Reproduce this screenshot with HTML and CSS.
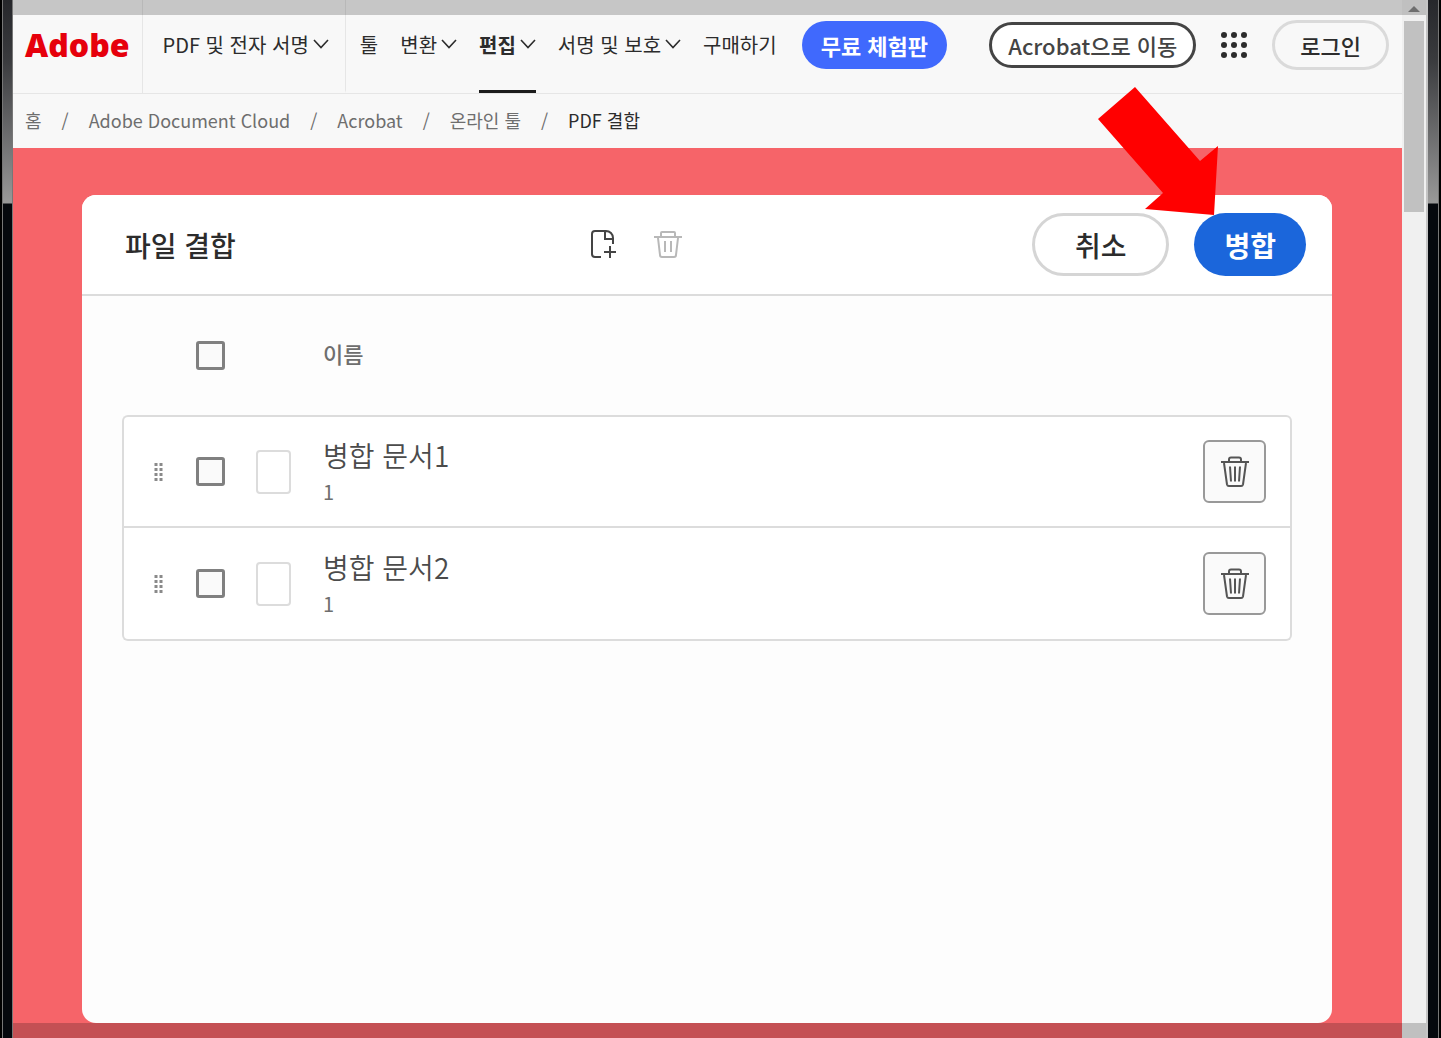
FILE: index.html
```html
<!DOCTYPE html>
<html lang="ko">
<head>
  <meta charset="UTF-8">
  <meta name="viewport" content="width=device-width, initial-scale=1.0">
  <title>PDF 결합</title>
  <link rel="stylesheet" href="styles.css">
</head>
<body>
  <svg class="sprite" aria-hidden="true">
    <symbol id="chevron" viewBox="0 0 16 10">
      <path d="M1 1l7 7.500 7-7.500" fill="none" stroke="currentColor" stroke-width="1.600"/>
    </symbol>
    <symbol id="trash" viewBox="0 0 28 32">
      <path d="M0 6h28M8 5.500V3.500a2 2 0 0 1 2-2h8a2 2 0 0 1 2 2v2M3 7l3 21.500a2 2 0 0 0 2 1.500h12a2 2 0 0 0 2-1.500L25 7M9 10.500l1 15M14 10.500v15M19 10.500l-1 15" fill="none" stroke="currentColor" stroke-width="2"/>
    </symbol>
    <symbol id="grip" viewBox="0 0 9 18">
      <path d="M2 0v18M7 0v18" fill="none" stroke="currentColor" stroke-width="3" stroke-dasharray="3 2"/>
    </symbol>
  </svg>

  <div class="edge edge-left"></div>

  <div class="page">
    <header class="header">
      <a class="logo" href="#">Adobe</a>
      <nav class="nav">
        <a class="nav-item nav-first" href="#">PDF 및 전자 서명<svg class="chevron"><use href="#chevron"/></svg></a>
        <a class="nav-item" href="#">툴</a>
        <a class="nav-item" href="#">변환<svg class="chevron"><use href="#chevron"/></svg></a>
        <a class="nav-item active" href="#">편집<svg class="chevron"><use href="#chevron"/></svg></a>
        <a class="nav-item" href="#">서명 및 보호<svg class="chevron"><use href="#chevron"/></svg></a>
        <a class="nav-item" href="#">구매하기</a>
      </nav>
      <div class="account">
        <button class="button trial">무료 체험판</button>
        <button class="button acrobat">Acrobat으로 이동</button>
        <button class="apps" aria-label="앱">
          <svg width="26" height="26" viewBox="0 0 26 26" fill="#2c2c2c">
            <circle cx="3" cy="3" r="3"/><circle cx="13" cy="3" r="3"/><circle cx="23" cy="3" r="3"/>
            <circle cx="3" cy="13" r="3"/><circle cx="13" cy="13" r="3"/><circle cx="23" cy="13" r="3"/>
            <circle cx="3" cy="23" r="3"/><circle cx="13" cy="23" r="3"/><circle cx="23" cy="23" r="3"/>
          </svg>
        </button>
        <button class="button login">로그인</button>
      </div>
    </header>

    <nav class="breadcrumbs">
      <a href="#">홈</a><span>/</span>
      <a href="#">Adobe Document Cloud</a><span>/</span>
      <a href="#">Acrobat</a><span>/</span>
      <a href="#">온라인 툴</a><span>/</span>
      <a class="current" href="#">PDF 결합</a>
    </nav>

    <main class="stage">
      <section class="card">
        <div class="toolbar">
          <h1 class="title">파일 결합</h1>
          <div class="tools">
            <button class="tool" aria-label="파일 추가">
              <svg width="28" height="30" viewBox="0 0 28 30" fill="none" stroke="currentColor" stroke-width="2">
                <path d="M11 27H5a3 3 0 0 1-3-3V4a3 3 0 0 1 3-3h11a7 7 0 0 1 7 7v6M15 1v8h8"/>
                <path d="M20 16v12M14 22h12"/>
              </svg>
            </button>
            <button class="tool" aria-label="삭제" disabled>
              <svg width="28" height="30" viewBox="0 0 28 30" fill="none" stroke="currentColor" stroke-width="2">
                <path d="M0 7h28M7 6V3a1 1 0 0 1 1-1h12a1 1 0 0 1 1 1v3M4 8l2 17a2 2 0 0 0 2 2h12a2 2 0 0 0 2-2l2-17M11 11v11M17 11v11"/>
              </svg>
            </button>
          </div>
          <div class="actions">
            <button class="button cancel">취소</button>
            <button class="button merge">병합</button>
            <svg class="arrow" width="120" height="128" viewBox="0 0 120 128">
              <path d="M37 0l65 74 18-15-4 69-69-6 18-16L0 32z" fill="#f00"/>
            </svg>
          </div>
        </div>

        <table class="files">
          <thead>
            <tr>
              <th class="col-grip"></th>
              <th class="col-check"><input class="check" type="checkbox" aria-label="모두 선택"></th>
              <th class="col-thumb"></th>
              <th class="col-name">이름</th>
              <th class="col-delete"></th>
            </tr>
          </thead>
          <tbody>
            <tr>
              <td class="col-grip"><svg class="grip"><use href="#grip"/></svg></td>
              <td class="col-check"><input class="check" type="checkbox" aria-label="병합 문서1"></td>
              <td class="col-thumb"><div class="thumb"></div></td>
              <td class="col-name"><div class="name">병합 문서1</div><div class="count">1</div></td>
              <td class="col-delete"><button class="delete" aria-label="병합 문서1 삭제"><svg class="trash"><use href="#trash"/></svg></button></td>
            </tr>
            <tr>
              <td class="col-grip"><svg class="grip"><use href="#grip"/></svg></td>
              <td class="col-check"><input class="check" type="checkbox" aria-label="병합 문서2"></td>
              <td class="col-thumb"><div class="thumb"></div></td>
              <td class="col-name"><div class="name">병합 문서2</div><div class="count">1</div></td>
              <td class="col-delete"><button class="delete" aria-label="병합 문서2 삭제"><svg class="trash"><use href="#trash"/></svg></button></td>
            </tr>
          </tbody>
        </table>
      </section>
    </main>
  </div>

  <div class="scrollbar">
    <svg class="scroll-up" width="12" height="6" viewBox="0 0 12 6"><path d="M0 6l6-6 6 6z" fill="#8a8a8a"/></svg>
    <div class="scroll-thumb"></div>
  </div>

  <div class="edge edge-right"></div>

  <div class="shade shade-top"></div>
  <div class="shade shade-bottom"></div>
</body>
</html>
```

FILE: styles.css
```css
* {
  box-sizing: border-box;
}
body {
  position: relative;
  display: flex;
  min-height: 100vh;
  margin: 0;
  font-family: "Noto Sans CJK KR", sans-serif;
  font-size: 20px;
  color: #2c2c2c;
  background: #f8f8f8;
}
a {
  color: inherit;
  text-decoration: none;
}
button {
  font-family: inherit;
  color: inherit;
  padding: 0;
  border: none;
  background: none;
  cursor: pointer;
}
svg {
  display: block;
}
.sprite {
  position: absolute;
  width: 0;
  height: 0;
}

/* Window frame */
.edge {
  flex: none;
  width: 13px;
  background: linear-gradient(#26272b 0, #3a3b3e 60px, #999 203px, #05080d 204px);
  border: 0 solid #000;
}
.edge-left {
  border-left-width: 2px;
  box-shadow: inset 1px 0 #777, inset -1px 0 #777;
}
.edge-right {
  border-right-width: 2px;
  box-shadow: inset -1px 0 #777;
}
.shade {
  position: absolute;
  left: 13px;
  right: 15px;
  height: 15px;
  background: rgba(0, 0, 0, 0.2);
  pointer-events: none;
}
.shade-top {
  top: 0;
}
.shade-bottom {
  bottom: 0;
}
.page {
  flex: 1;
  display: flex;
  flex-direction: column;
  min-width: 0;
}

/* Header */
.header {
  display: flex;
  align-items: center;
  height: 94px;
  padding-right: 13px;
  border-bottom: 1px solid #e6e6e6;
  white-space: nowrap;
}
.logo {
  display: flex;
  align-items: center;
  height: 100%;
  padding: 0 12px 4px;
  border-right: 1px solid #e6e6e6;
  color: #e6000c;
  font-family: "Open Sans", sans-serif;
  font-size: 32px;
  font-weight: 800;
}
.nav {
  display: flex;
  gap: 22px;
  height: 100%;
}
.nav-item {
  display: flex;
  align-items: center;
  gap: 4px;
  height: 100%;
  padding-bottom: 2px;
  border-bottom: 3px solid transparent;
}
.nav-first {
  padding-left: 20px;
  padding-right: 16px;
  margin-right: -8px;
  border-right: 1px solid #e6e6e6;
}
.nav-item.active {
  border-bottom-color: #1c1c1c;
  font-weight: 700;
}
.chevron {
  width: 16px;
  height: 10px;
}
.button {
  border-radius: 32px;
  font-size: 22px;
  font-weight: 700;
  white-space: nowrap;
}
.account {
  flex: 1;
  display: flex;
  align-items: center;
  gap: 25px;
  padding-bottom: 4px;
  margin-left: 25px;
}
.trial {
  height: 48px;
  padding: 0 19px;
  margin-right: auto;
  background: #4069fd;
  color: #fff;
}
.acrobat {
  height: 46px;
  padding: 0 16px;
  border: 3px solid #444;
  background: #fff;
  color: #444;
  font-weight: 500;
}
.login {
  height: 50px;
  padding: 0 25px;
  border: 3px solid #dadada;
  font-weight: 500;
}

/* Breadcrumbs */
.breadcrumbs {
  display: flex;
  align-items: center;
  gap: 20px;
  height: 54px;
  padding: 0 12px 2px;
  color: #6e6e6e;
  font-size: 18px;
}
.breadcrumbs .current {
  color: #2c2c2c;
}

/* Merge card */
.stage {
  flex: 1;
  display: flex;
  padding: 47px 70px 15px 69px;
  background: #f66469;
}
.card {
  flex: 1;
  border-radius: 14px;
  background: #fdfdfd;
}
.toolbar {
  display: flex;
  align-items: center;
  height: 101px;
  padding: 0 26px 0 43px;
  border-bottom: 2px solid #dcdcdc;
  border-radius: 14px 14px 0 0;
  background: #fff;
}
.title {
  width: 39%;
  margin: 0 4px 0 0;
  font-size: 28px;
  font-weight: 500;
}
.tools {
  display: flex;
  gap: 36px;
  color: #444;
}
.tool:disabled {
  color: #b8b8b8;
}
.actions {
  position: relative;
  display: flex;
  gap: 25px;
  margin-left: auto;
}
.cancel,
.merge {
  height: 63px;
  font-size: 28px;
}
.cancel {
  padding: 0 40px;
  border: 3px solid #d5d5d5;
  font-weight: 500;
}
.merge {
  padding: 0 30px;
  background: #1b66db;
  color: #fff;
}
.arrow {
  position: absolute;
  right: 88px;
  bottom: 61px;
}

/* File list */
.files {
  width: calc(100% - 80px);
  margin: 0 40px;
  border-collapse: separate;
  border-spacing: 0;
}
.files th,
.files td {
  padding: 0;
  text-align: left;
}
.files thead th {
  height: 119px;
  color: #6e6e6e;
  font-size: 22px;
  font-weight: 500;
}
.files thead .col-name {
  padding-bottom: 6px;
}
.files tbody td {
  height: 113px;
  border-bottom: 2px solid #dcdcdc;
  background: #fff;
}
.files tbody tr:first-child td {
  border-top: 2px solid #dcdcdc;
}
.files tbody td:first-child {
  border-left: 2px solid #dcdcdc;
}
.files tbody td:last-child {
  border-right: 2px solid #dcdcdc;
}
.files tbody tr:first-child td:first-child {
  border-top-left-radius: 6px;
}
.files tbody tr:first-child td:last-child {
  border-top-right-radius: 6px;
}
.files tbody tr:last-child td:first-child {
  border-bottom-left-radius: 6px;
}
.files tbody tr:last-child td:last-child {
  border-bottom-right-radius: 6px;
}
.col-grip {
  width: 74px;
}
.col-check {
  width: 60px;
}
.col-thumb {
  width: 67px;
}
.col-delete {
  width: 89px;
}
.grip {
  width: 9px;
  height: 18px;
  margin-left: 30px;
  color: #8a8a8a;
}
.check {
  display: block;
  appearance: none;
  width: 29px;
  height: 29px;
  margin: 0;
  border: 3px solid #808080;
  border-radius: 3px;
  background: #fafafa;
}
.thumb {
  width: 35px;
  height: 44px;
  border: 2px solid #dcdcdc;
  border-radius: 4px;
}
.name {
  color: #4b4b4b;
  font-size: 28px;
  font-weight: 350;
  line-height: 40px;
}
.count {
  color: #6e6e6e;
  line-height: 34px;
}
.delete {
  display: flex;
  align-items: center;
  justify-content: center;
  width: 63px;
  height: 63px;
  border: 2px solid #999;
  border-radius: 6px;
  background: #fafafa;
  color: #555;
}
.trash {
  width: 28px;
  height: 32px;
}

/* Scrollbar */
.scrollbar {
  flex: none;
  display: flex;
  flex-direction: column;
  align-items: center;
  gap: 9px;
  width: 26px;
  padding-top: 6px;
  border-right: 2px solid #c4c4c4;
  background: #f0f0f0;
}
.scroll-thumb {
  width: 20px;
  height: 191px;
  background: #c1c1c1;
}
```
